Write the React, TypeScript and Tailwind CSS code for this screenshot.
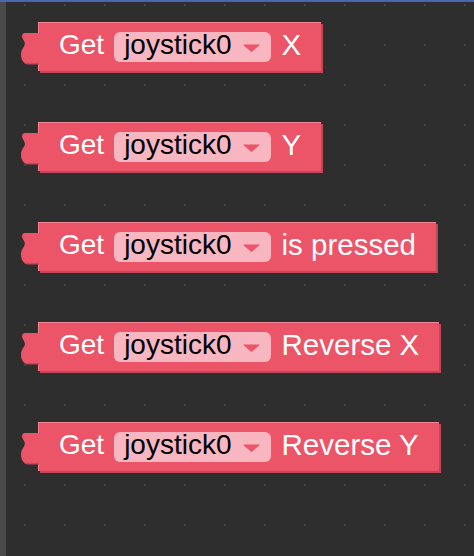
const blocks = ['X', 'Y', 'is pressed', 'Reverse X', 'Reverse Y'];

function Tab() {
  return (
    <svg width="18" height="32" viewBox="0 0 18 32" className="mt-[11px] -mr-[1px] relative z-10 shrink-0">
      <path
        d="M18,1.5 L5,1.5 C3,1.5 2,3 2,5 C2,7.5 5,9.5 5,12.5 C5,15 1,17.5 1,22.5 C1,27.5 2.5,30.5 6,31.5 L18,31.5 Z"
        fill="#c5465a"
      />
      <path
        d="M18,0 L4,0 C2,0 1,1.5 1,3.5 C1,6 4,8 4,11 C4,13.5 0,16 0,21 C0,26 1.5,29 5,30 L18,30 Z"
        fill="#ec5468"
      />
    </svg>
  );
}

function Dropdown() {
  return (
    <div className="ml-[10px] flex items-start h-[30px] rounded-[6px] bg-[#f8b6c1] pl-[10px] pr-[11px]">
      <span className="leading-[26px] text-black">joystick0</span>
      <svg width="17" height="8" viewBox="0 0 17 8" className="ml-[11px] mt-[12px]">
        <path d="M1,0.5 L16,0.5 Q17,0.5 16.2,1.4 L9.2,7.4 Q8.5,8 7.8,7.4 L0.8,1.4 Q0,0.5 1,0.5 Z" fill="#ec5468" />
      </svg>
    </div>
  );
}

function Block({ label }: { label: string }) {
  return (
    <div className="flex items-start">
      <Tab />
      <div className="flex items-start h-[49px] bg-[#ec5468] border-t border-l border-[#f28594] shadow-[2px_2px_0_#c5465a] pl-[20px] pr-[20px] pt-[9px]">
        <span className="h-[30px] leading-[26px] text-white">Get</span>
        <Dropdown />
        <span className="ml-[11px] h-[30px] leading-[26px] text-white text-[29.5px] whitespace-nowrap">{label}</span>
      </div>
    </div>
  );
}

export default function App() {
  return (
    <div className="w-[474px] h-[556px] bg-[#2e2e2e] flex flex-col overflow-hidden text-[28px] font-['Liberation_Sans',Arial,sans-serif]">
      <div className="h-[2px] bg-[#4a68b1] shrink-0" />
      <div className="flex flex-1">
        <div className="w-[6px] bg-[#4a4a4a] shrink-0" />
        <div className="flex-1 flex flex-col items-start gap-[51px] pt-[20px] pl-[15px] bg-[radial-gradient(circle,#424242_1px,transparent_1.5px)] bg-[length:40px_40px] bg-[position:-1px_-17px]">
          {blocks.map((b) => (
            <Block key={b} label={b} />
          ))}
        </div>
      </div>
    </div>
  );
}
